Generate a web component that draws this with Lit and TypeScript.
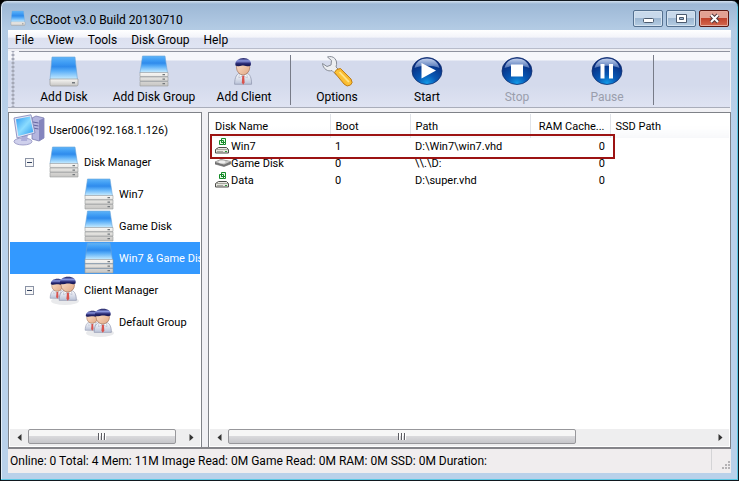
import { LitElement, html, css, svg, nothing } from "lit";
import { customElement, state } from "lit/decorators.js";
import { classMap } from "lit/directives/class-map.js";

interface Tool {
  icon: string;
  label: string;
  disabled?: boolean;
}

interface TreeNode {
  icon: string;
  label: string;
  level: number;
  parent?: boolean;
}

interface Disk {
  icon: string;
  name: string;
  boot: string;
  path: string;
  cache: string;
}

const MENUS = ["File", "View", "Tools", "Disk Group", "Help"];

const TOOL_GROUPS: Tool[][] = [
  [
    { icon: "disk", label: "Add Disk" },
    { icon: "disks", label: "Add Disk Group" },
    { icon: "client", label: "Add Client" },
  ],
  [
    { icon: "wrench", label: "Options" },
    { icon: "start", label: "Start" },
    { icon: "stop", label: "Stop", disabled: true },
    { icon: "pause", label: "Pause", disabled: true },
  ],
];

const NODES: TreeNode[] = [
  { icon: "computer", label: "User006(192.168.1.126)", level: 0 },
  { icon: "disks", label: "Disk Manager", level: 1, parent: true },
  { icon: "disks", label: "Win7", level: 2 },
  { icon: "disks", label: "Game Disk", level: 2 },
  { icon: "disks", label: "Win7 & Game Disk", level: 2 },
  { icon: "clients", label: "Client Manager", level: 1, parent: true },
  { icon: "clients", label: "Default Group", level: 2 },
];

const DISKS: Disk[] = [
  { icon: "image", name: "Win7", boot: "1", path: "D:\\Win7\\win7.vhd", cache: "0" },
  { icon: "drive", name: "Game Disk", boot: "0", path: "\\\\.\\D:", cache: "0" },
  { icon: "image", name: "Data", boot: "0", path: "D:\\super.vhd", cache: "0" },
];

const person = svg`
  <path d="M6 29 C6 21 9 18 12 17 H20 C24 18 26 22 26 29 Z" fill="url(#shirt)" stroke="#8d94ad" stroke-width=".8"/>
  <path d="M12 17 L16 21 L20 17 L21 22 L16 20 L11 22Z" fill="#fff" stroke="#9ba3bc" stroke-width=".6"/>
  <path d="M15 20 H17.300 L17.800 27 L16 29.500 L14.500 27Z" fill="#d9534d"/>
  <ellipse cx="16" cy="11" rx="7.800" ry="8" fill="url(#skin)" stroke="#9b6a50" stroke-width=".7"/>
  <path d="M7 9 C6 4 11 1 16.500 1 C22 1 26.500 4 25 9 C22 11 19 8.500 15 9 C12 9.500 10 10.500 7 9Z" fill="url(#hair)"/>
`;

const ball = svg`
  <ellipse cx="16" cy="16" rx="15" ry="13.500" fill="url(#ball)" stroke="#123070" stroke-width=".8"/>
  <path d="M3.500 13 C5 6.500 10 3.500 16 3.500 C22 3.500 27 6.500 28.500 13 C21 10 11 10 3.500 13Z" fill="url(#gloss)"/>
`;

const library = svg`
  <defs>
    <linearGradient id="blue" x1="0" y1="0" x2="0" y2="1">
      <stop offset="0" stop-color="#5fb4f8"/><stop offset=".25" stop-color="#3e9cf4"/>
      <stop offset=".42" stop-color="#2f8bec"/><stop offset=".6" stop-color="#58adf8"/><stop offset="1" stop-color="#d2f2ff"/>
    </linearGradient>
    <linearGradient id="metal" x1="0" y1="0" x2="0" y2="1">
      <stop offset="0" stop-color="#f8f7f4"/><stop offset="1" stop-color="#c6c5c3"/>
    </linearGradient>
    <linearGradient id="skin" x1="0" y1="0" x2="1" y2="1">
      <stop offset="0" stop-color="#fde4cf"/><stop offset="1" stop-color="#e2a783"/>
    </linearGradient>
    <linearGradient id="hair" x1="0" y1="0" x2="0" y2="1">
      <stop offset="0" stop-color="#181858"/><stop offset=".35" stop-color="#8c97e0"/><stop offset=".7" stop-color="#24246e"/><stop offset="1" stop-color="#181850"/>
    </linearGradient>
    <linearGradient id="shirt" x1="0" y1="0" x2="0" y2="1">
      <stop offset="0" stop-color="#ffffff"/><stop offset="1" stop-color="#b9c2d8"/>
    </linearGradient>
    <radialGradient id="ball" cx=".5" cy=".95" r=".8">
      <stop offset="0" stop-color="#119ae8"/><stop offset=".4" stop-color="#0858b4"/><stop offset="1" stop-color="#082a7c"/>
    </radialGradient>
    <linearGradient id="gloss" x1="0" y1="0" x2="0" y2="1">
      <stop offset="0" stop-color="#c2d0ec"/><stop offset="1" stop-color="#4b70b4"/>
    </linearGradient>
    <linearGradient id="gold" x1="0" y1="1" x2="1" y2="0">
      <stop offset="0" stop-color="#f09612"/><stop offset=".5" stop-color="#fdc63a"/><stop offset="1" stop-color="#e98f10"/>
    </linearGradient>
    <linearGradient id="screen" x1="0" y1="0" x2="1" y2="1">
      <stop offset="0" stop-color="#2d9af2"/><stop offset=".5" stop-color="#8bdcff"/><stop offset="1" stop-color="#2798ee"/>
    </linearGradient>
  </defs>

  <symbol id="disk" viewBox="0 0 32 32">
    <path d="M4 2 H27 L29.500 25 H2Z" fill="url(#blue)" stroke="#6aa5d8" stroke-width=".6"/>
    <path d="M2 24 H30 V29.500 Q30 31 28.500 31 H3.500 Q2 31 2 29.500Z" fill="url(#metal)" stroke="#98999a" stroke-width=".7"/>
    <rect x="24" y="27" width="3" height="1.500" fill="#73787c"/>
  </symbol>

  <symbol id="disks" viewBox="0 0 32 32">
    <path d="M4.500 1 H27 L29.500 18 H2Z" fill="url(#blue)" stroke="#6aa5d8" stroke-width=".6"/>
    <path d="M2 17.500 H30 V21.500 H2Z M2 22 H30 V26 H2Z M2 26.500 H30 V31 H2Z" fill="url(#metal)" stroke="#999b9c" stroke-width=".6"/>
    <path d="M24.500 19 H27 V20.300 H24.500Z M24.500 23.500 H27 V24.800 H24.500Z M24.500 28 H27 V29.300 H24.500Z" fill="#73787c"/>
  </symbol>

  <symbol id="client" viewBox="0 0 32 32"><g transform="translate(1.500 2) scale(.85 .94)">${person}</g></symbol>

  <symbol id="clients" viewBox="0 0 32 32">
    <ellipse cx="17" cy="27" rx="14" ry="4" fill="#c9cbd0" opacity=".4"/>
    <g transform="translate(-2 4) scale(.7)">${person}</g>
    <g transform="translate(6 2) scale(.86 .84)">${person}</g>
  </symbol>

  <symbol id="wrench" viewBox="0 0 32 32">
    <path d="M15 12 L20 17 L15.500 20 L11 15.500 C7 17 2 14 1.500 8.500 L6 11.500 L10 10 L10.500 5.500 L6.500 2 C12 0 17.500 4.500 15 12Z" fill="#eceef1" stroke="#878c96" stroke-width="1"/>
    <path d="M13.500 17.500 Q15 13.500 19.500 13.500 L30 24 Q32.500 28 29.500 30 Q26 32.500 23 29Z" fill="url(#gold)" stroke="#b8750e" stroke-width=".9"/>
    <path d="M18.500 17 L28 27" stroke="#ffe48a" stroke-width="1.800"/>
  </symbol>

  <symbol id="start" viewBox="0 0 32 32">${ball}<path d="M10.500 8 L25 15.500 L10.500 23.500Z" fill="#fff"/></symbol>
  <symbol id="stop" viewBox="0 0 32 32">${ball}<path d="M10 9.500 H22 V21.500 H10Z" fill="#fff"/></symbol>
  <symbol id="pause" viewBox="0 0 32 32">${ball}<path d="M9.500 9 H13.500 V23.500 H9.500Z M18 9 H22 V23.500 H18Z" fill="#fff"/></symbol>

  <symbol id="computer" viewBox="0 0 32 32">
    <path d="M19 4 L23 2 L31 4 V24 L26 27 L19 25Z" fill="#b4b5df" stroke="#6f70a8" stroke-width=".7"/>
    <path d="M26 6.500 L31 4 V24 L26 27Z" fill="#8485bd"/>
    <path d="M20 8 L25.500 9 M20 11 L25.500 12 M20 14 L25.500 15" stroke="#6566a0" stroke-width="1"/>
    <ellipse cx="10" cy="27.500" rx="9" ry="3.500" fill="#cfd0ec" stroke="#8283b6" stroke-width=".7"/>
    <path d="M9 20 H15 L14 27 H8Z" fill="#adaeda"/>
    <path d="M1 4 L18 0.800 L22 19 L4 24Z" fill="#e3e5f4" stroke="#7c83b8" stroke-width=".8"/>
    <path d="M3 5.300 L17 2.600 L20.300 18 L5.300 22Z" fill="url(#screen)"/>
  </symbol>

  <symbol id="image" viewBox="0 0 16 16">
    <path d="M3.500 9.500 H11.500 L13.500 11.500 V15 H.5 V11.500Z" fill="#e6e6e0" stroke="#4c4d49" stroke-width="1"/>
    <path d="M1 11.500 H13" stroke="#a5a69d" stroke-width="1"/>
    <path d="M2 13.500 H8" stroke="#a6a79e" stroke-width="1"/>
    <path d="M10 13.500 H12" stroke="#2c9a3b" stroke-width="1"/>
    <path d="M6.500 .5 H10.500 V4.500 H6.500Z M4.500 2.500 H8.500 V6.500 H4.500Z" fill="#e9f7e7" stroke="#138a27" stroke-width="1"/>
    <path d="M6.500 2.500 V4.500 H8.500 M8.500 6.500 H10.500 V4.500" fill="none" stroke="#138a27" stroke-width="1"/>
  </symbol>

  <symbol id="drive" viewBox="0 0 16 16">
    <path d="M0 7 L6 4.500 L15.500 6.500 V9 L9 11.500 L0 9Z" fill="#777" stroke="#5e5e5e" stroke-width=".6"/>
    <path d="M0 7 L6 4.500 L15.500 6.500 L9 9.500Z" fill="#c9c9c7"/>
    <ellipse cx="7" cy="7" rx="3.500" ry="1.300" fill="#efefef"/>
  </symbol>
`;

const icon = (name: string, small = false) => html`
  <svg class=${classMap({ icon: true, small })} aria-hidden="true"><use href="#${name}"></use></svg>
`;

@customElement("app-root")
export class AppRoot extends LitElement {
  @state() private selected = 4;

  static styles = css`
    * {
      box-sizing: border-box;
    }
    :host {
      display: block;
      background: #000;
      color: #000;
      font: 12px/18px Roboto, "Open Sans", sans-serif;
      --compact: 11px/17px Roboto, "Open Sans", sans-serif;
    }
    button {
      margin: 0;
      padding: 0;
      border: 0;
      background: none;
      color: inherit;
      font: inherit;
    }
    .library {
      position: absolute;
      width: 0;
      height: 0;
    }
    .icon {
      flex: none;
      width: 32px;
      height: 32px;
    }
    .icon.small {
      width: 16px;
      height: 16px;
    }
    .window {
      display: flex;
      flex-direction: column;
      min-height: 100vh;
      padding: 0 7px 7px;
      border: 1px solid #10181f;
      border-radius: 7px 7px 0 0;
      background: linear-gradient(#d3e1ef 0, #9db8d6 3px, #b3cbe4 28px, #b9d1ea 130px, #b9d1ea 100%);
      box-shadow: inset -1px -1px #5cc8e4, inset 1px 0 #e4eef8;
    }
    .title {
      display: flex;
      align-items: center;
      height: 29px;
      padding: 0 2px;
      gap: 4px;
    }
    .title h1 {
      flex: 1;
      margin: 0;
      padding-top: 8px;
      font: inherit;
    }
    .title .icon {
      margin-top: 4px;
    }
    .controls {
      display: flex;
      gap: 3px;
      padding-top: 5px;
    }
    .control {
      display: grid;
      place-items: center;
      width: 30px;
      height: 17px;
      border: 1px solid #54708f;
      border-radius: 2px;
      background: linear-gradient(#c8d9eb 0 45%, #9db7d2 50%, #b5cde3);
      box-shadow: inset 0 0 0 1px #d5e3f0;
    }
    .control.close {
      border-color: #5a1712;
      background: linear-gradient(#e2a093 0 45%, #c0422c 50%, #d4684f);
      box-shadow: inset 0 0 0 1px #e5a99c;
    }
    .control svg {
      width: 13px;
      height: 11px;
    }
    .client {
      flex: 1;
      display: flex;
      flex-direction: column;
      background: #f0f0f4;
    }
    .menu {
      display: flex;
      height: 19px;
      background: linear-gradient(#fff, #f3f4fa 40%, #dde1f0 45%, #dfe4f3);
      border-bottom: 1px solid #b8bccb;
    }
    .menu button {
      padding: 1px 7px 0;
    }
    .toolbar {
      display: flex;
      height: 57px;
      margin-top: 2px;
      margin-right: 1px;
      border-bottom: 1px solid #a9adba;
      background: linear-gradient(#f6f7fb 0 9px, #d4daec 10px 34px, #dfe3f2 56px);
    }
    .grip {
      width: 11px;
      background: radial-gradient(circle at 2px 2px, #a4a8b6 1px, transparent 2px) 3px 2px / 8px 4px repeat-y;
    }
    .tools {
      display: flex;
      flex: 1;
      border-top: 1px solid #8f939f;
      padding-top: 3px;
    }
    .tool {
      display: flex;
      flex-direction: column;
      align-items: center;
      width: 90px;
      white-space: nowrap;
    }
    .tool .icon {
      margin-bottom: 1px;
    }
    .tool:disabled {
      color: #9a9eac;
    }
    .divider {
      width: 1px;
      height: 50px;
      margin: 0 1px;
      background: #777b88;
    }
    .panes {
      flex: 1;
      display: grid;
      grid-template-columns: 194px minmax(0, 1fr);
      gap: 6px;
      padding-top: 4px;
      border-bottom: 2px solid #85858a;
    }
    .pane {
      display: flex;
      flex-direction: column;
      min-width: 0;
      padding: 1px;
      border: 1px solid #7f8288;
      border-bottom: 0;
      background: #fff;
      font: var(--compact);
    }
    .tree {
      flex: 1;
      margin: 0;
      padding: 0;
      list-style: none;
      overflow: hidden;
    }
    .node {
      display: flex;
      align-items: center;
      height: 32px;
      padding-left: 3px;
      white-space: nowrap;
    }
    .node.selected {
      background: #3399ff;
      color: #fff;
    }
    .node.branch {
      padding-left: 15px;
    }
    .node.leaf {
      padding-left: 73px;
    }
    .toggle {
      display: grid;
      place-items: center;
      width: 9px;
      height: 9px;
      margin-right: 14px;
      border: 1px solid #8b93a5;
      background: #f7f7f7;
    }
    .toggle::before {
      content: "";
      width: 5px;
      height: 1px;
      background: #31415f;
    }
    .entry {
      display: flex;
      align-items: center;
      gap: 4px;
    }
    .list {
      position: relative;
      flex: 1;
    }
    table {
      width: 100%;
      border-collapse: collapse;
      table-layout: fixed;
    }
    th,
    td {
      height: 17px;
      padding: 0 5px;
      font: var(--compact);
      text-align: left;
      white-space: nowrap;
      overflow: hidden;
    }
    th {
      height: 24px;
      border-right: 1px solid #e0e3e8;
      background: linear-gradient(#fff 50%, #f7f8fa);
    }
    th:last-child {
      border-right: 0;
    }
    .name {
      width: 120px;
    }
    .boot {
      width: 80px;
    }
    .path {
      width: 120px;
    }
    .cache {
      width: 80px;
      text-align: right;
    }
    .label {
      display: flex;
    }
    .highlight {
      position: absolute;
      top: 20px;
      left: 0;
      width: 405px;
      height: 25px;
      border: 2px solid #9c1313;
    }
    .scroll {
      display: flex;
      height: 17px;
      background: #eeeeef;
    }
    .scroll .arrow {
      flex: none;
      display: grid;
      place-items: center;
      width: 18px;
    }
    .arrow svg {
      width: 5px;
      height: 7px;
    }
    .track {
      flex: 1;
    }
    .thumb {
      display: flex;
      align-items: center;
      justify-content: center;
      gap: 1px;
      width: 96%;
      height: 15px;
      border: 1px solid #97979b;
      border-radius: 2px;
      background: linear-gradient(#f6f6f6 0 45%, #d9d9dc 50%, #c6c6ca);
    }
    .wide .thumb {
      width: 72%;
    }
    .thumb i {
      width: 2px;
      height: 7px;
      background: linear-gradient(90deg, #5c5c62 1px, #fff 1px);
    }
    .status {
      display: flex;
      height: 24px;
      background: #f0edee;
      line-height: 22px;
    }
    .status p {
      flex: 1;
      margin: 0;
      padding: 1px 2px;
      white-space: nowrap;
    }
    .size {
      display: grid;
      align-items: end;
      justify-items: end;
      width: 20px;
      height: 21px;
      padding: 1px;
      border-left: 1px solid #d4d4d6;
    }
    .size svg {
      width: 8px;
      height: 8px;
    }
  `;

  private scrollbar(wide: boolean) {
    return html`
      <div class=${classMap({ scroll: true, wide })}>
        <button class="arrow" aria-label="Scroll left">
          <svg viewBox="0 0 5 7"><path d="M4.500 0 V7 L.5 3.500Z" fill="#333" /></svg>
        </button>
        <div class="track"><div class="thumb"><i></i><i></i><i></i></div></div>
        <button class="arrow" aria-label="Scroll right">
          <svg viewBox="0 0 5 7"><path d="M.5 0 V7 L4.500 3.500Z" fill="#333" /></svg>
        </button>
      </div>
    `;
  }

  private node(item: TreeNode, index: number) {
    const classes = {
      node: true,
      branch: item.level === 1,
      leaf: item.level === 2,
      selected: index === this.selected,
    };
    return html`
      <li class=${classMap(classes)}>
        ${item.parent ? html`<button class="toggle" aria-label="Collapse ${item.label}"></button>` : nothing}
        <button class="entry" @click=${() => (this.selected = index)}>${icon(item.icon)}${item.label}</button>
      </li>
    `;
  }

  private row(disk: Disk) {
    return html`
      <tr>
        <td><span class="label">${icon(disk.icon, true)}${disk.name}</span></td>
        <td>${disk.boot}</td>
        <td>${disk.path}</td>
        <td class="cache">${disk.cache}</td>
        <td></td>
      </tr>
    `;
  }

  render() {
    return html`
      <svg class="library" aria-hidden="true">${library}</svg>
      <div class="window">
        <header class="title">
          ${icon("disk", true)}
          <h1>CCBoot v3.0 Build 20130710</h1>
          <div class="controls">
            <button class="control" aria-label="Minimize">
              <svg viewBox="0 0 13 11"><rect x="1.500" y="5.500" width="10" height="4" rx="1" fill="#fff" stroke="#4b5a6e" /></svg>
            </button>
            <button class="control" aria-label="Maximize">
              <svg viewBox="0 0 13 11">
                <path d="M1.500 1.500 H11.500 V9.500 H1.500Z M4.500 4.500 V6.500 H8.500 V4.500Z" fill="#fff" fill-rule="evenodd" stroke="#4b5a6e" />
              </svg>
            </button>
            <button class="control close" aria-label="Close">
              <svg viewBox="0 0 13 11">
                <path d="M3 2 L10 9 M10 2 L3 9" stroke="#54393c" stroke-width="4" />
                <path d="M3 2 L10 9 M10 2 L3 9" stroke="#fff" stroke-width="2" />
              </svg>
            </button>
          </div>
        </header>
        <main class="client">
          <nav class="menu">${MENUS.map((m) => html`<button>${m}</button>`)}</nav>
          <div class="toolbar">
            <span class="grip"></span>
            <div class="tools">
              ${TOOL_GROUPS.map(
                (group) => html`
                  ${group.map(
                    (t) => html`<button class="tool" ?disabled=${t.disabled}>${icon(t.icon)}${t.label}</button>`,
                  )}
                  <span class="divider"></span>
                `,
              )}
            </div>
          </div>
          <div class="panes">
            <section class="pane">
              <ul class="tree">
                ${NODES.map((n, i) => this.node(n, i))}
              </ul>
              ${this.scrollbar(false)}
            </section>
            <section class="pane">
              <div class="list">
                <table>
                  <thead>
                    <tr>
                      <th class="name">Disk Name</th>
                      <th class="boot">Boot</th>
                      <th class="path">Path</th>
                      <th class="cache">RAM Cache...</th>
                      <th>SSD Path</th>
                    </tr>
                  </thead>
                  <tbody>
                    ${DISKS.map((d) => this.row(d))}
                  </tbody>
                </table>
                <div class="highlight"></div>
              </div>
              ${this.scrollbar(true)}
            </section>
          </div>
          <footer class="status">
            <p>Online: 0 Total: 4 Mem: 11M Image Read: 0M Game Read: 0M RAM: 0M SSD: 0M Duration:</p>
            <span class="size">
              <svg viewBox="0 0 8 8">
                <path d="M6 0h2v2h-2z M3 3h2v2h-2z M6 3h2v2h-2z M0 6h2v2h-2z M3 6h2v2h-2z M6 6h2v2h-2z" fill="#b5b3b5" />
              </svg>
            </span>
          </footer>
        </main>
      </div>
    `;
  }
}
